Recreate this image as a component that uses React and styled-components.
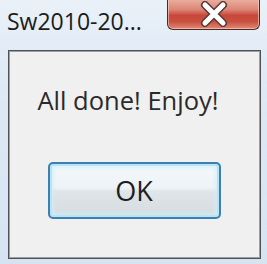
import React from "react";
import styled, { createGlobalStyle } from "styled-components";

const Global = createGlobalStyle`
  html, body { margin: 0; padding: 0; background: #dfe9f4; }
  body { font-family: "Open Sans", "Noto Sans", sans-serif; }
`;

const Window = styled.div`
  width: 267px;
  height: 264px;
  box-sizing: border-box;
  display: flex;
  flex-direction: column;
  background: linear-gradient(180deg, #e9f0f8 0%, #dce8f4 40%, #d6e4f2 100%);
  overflow: hidden;
`;

const TitleBar = styled.div`
  height: 50px;
  display: flex;
  align-items: flex-start;
  padding-left: 7px;
  padding-right: 7px;
  box-sizing: border-box;
`;

const Title = styled.div`
  flex: 1;
  font-size: 23px;
  color: #1c1c1c;
  line-height: 1;
  padding-top: 10px;
  white-space: nowrap;
`;

const Close = styled.div`
  width: 93px;
  height: 31px;
  margin-top: -1px;
  box-sizing: border-box;
  border: 1px solid #4a2a24;
  border-top: none;
  border-radius: 0 0 6px 6px;
  background: linear-gradient(180deg, #eab0a2 0%, #dc8676 35%, #c8473a 55%, #c9503f 75%, #e08a78 100%);
  box-shadow: inset 0 0 0 1px rgba(255, 220, 210, 0.55);
  display: flex;
  align-items: center;
  justify-content: center;
`;

const Panel = styled.div`
  flex: 1;
  margin: 0 6px 5px 8px;
  border: 1px solid #505356;
  box-shadow: inset 0 0 0 1px #9aa0a6;
  background: #f0f0f0;
  display: flex;
  flex-direction: column;
  align-items: center;
  padding-top: 37px;
  box-sizing: border-box;
`;

const Message = styled.div`
  font-size: 25.5px;
  color: #2a2a2a;
  line-height: 1;
  margin-left: -13px;
`;

const OkButton = styled.div`
  margin-top: 48px;
  width: 173px;
  height: 57px;
  box-sizing: border-box;
  border: 2px solid #3d7fae;
  border-radius: 5px;
  background: linear-gradient(180deg, #f3f8fb 0%, #edf3f6 45%, #dfe5e8 52%, #d5dcdf 100%);
  box-shadow: inset 0 0 0 2px #b8e4f6, inset 0 0 4px 3px #d2eefa;
  display: flex;
  align-items: center;
  justify-content: center;
  font-size: 27px;
  color: #1e1e1e;
  margin-left: -1px;
`;

export default function App() {
  return (
    <>
      <Global />
      <Window>
        <TitleBar>
          <Title>Sw2010-20...</Title>
          <Close>
            <svg width="30" height="26" viewBox="0 0 30 26">
              <path d="M6 4 L24 22 M24 4 L6 22" stroke="#5a3a36" strokeWidth="8" strokeLinecap="round" fill="none" />
              <path d="M6 4 L24 22 M24 4 L6 22" stroke="#ffffff" strokeWidth="5" strokeLinecap="round" fill="none" />
            </svg>
          </Close>
        </TitleBar>
        <Panel>
          <Message>All done! Enjoy!</Message>
          <OkButton>OK</OkButton>
        </Panel>
      </Window>
    </>
  );
}
